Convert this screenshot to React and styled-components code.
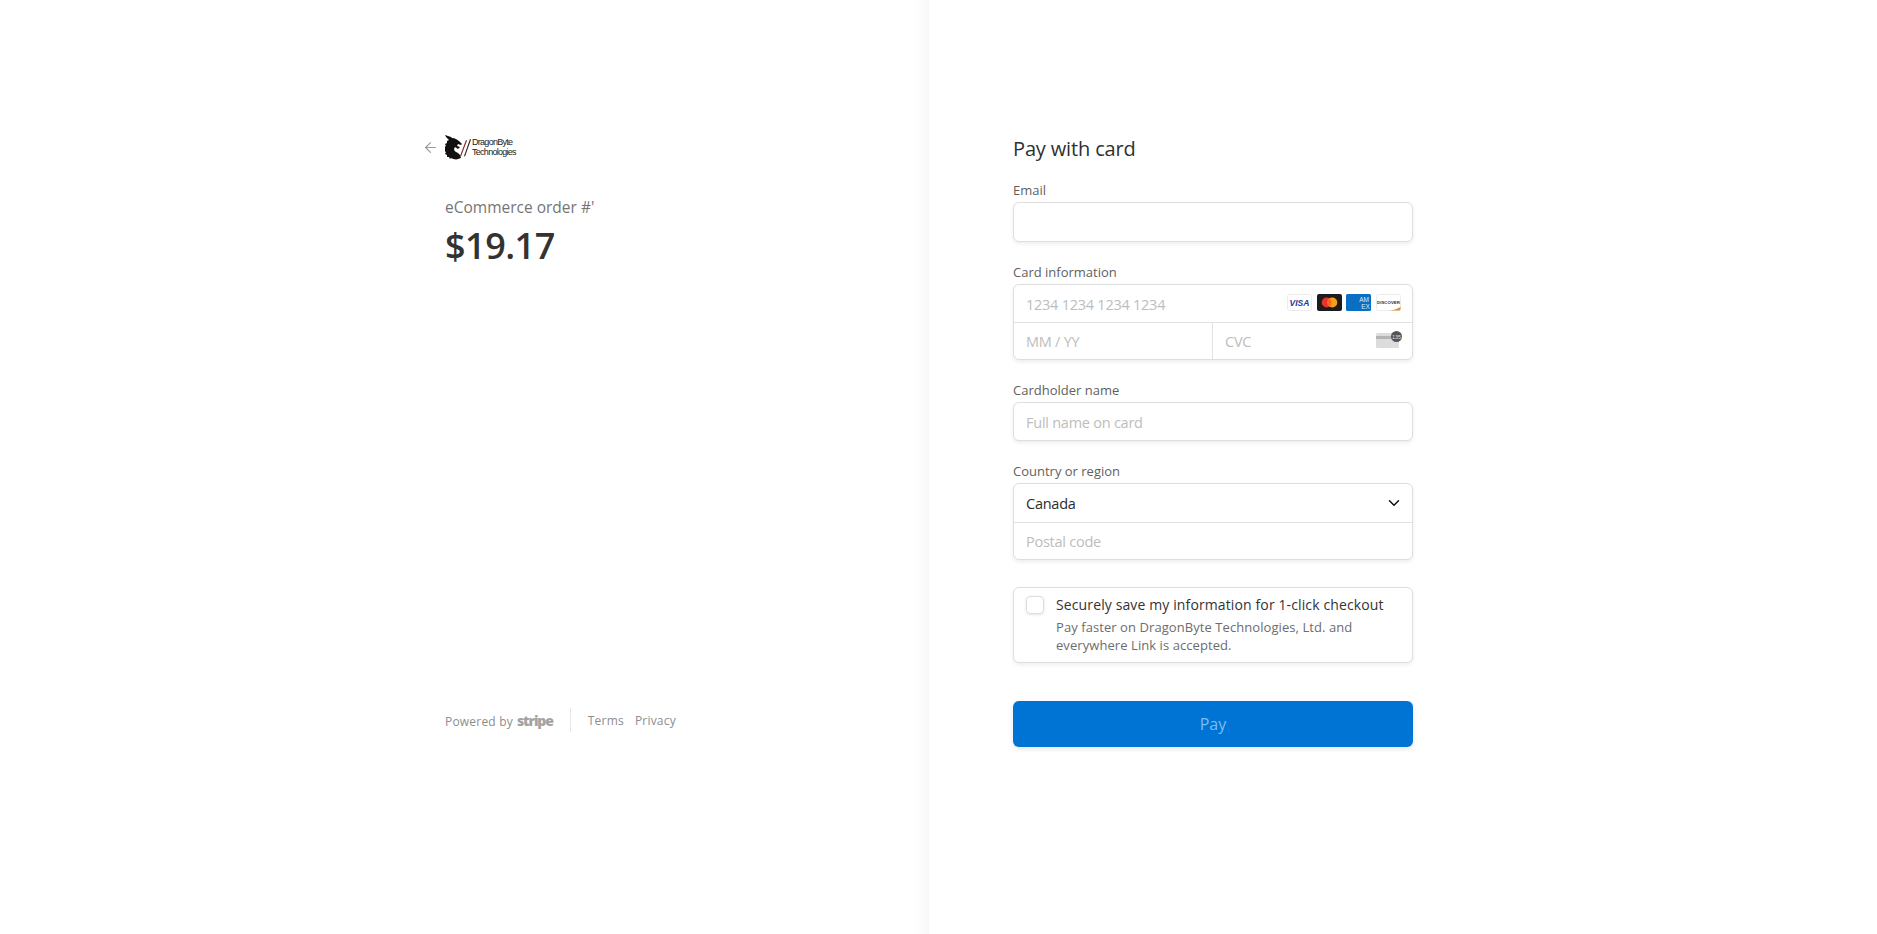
import styled, { createGlobalStyle } from "styled-components";
import { ArrowLeft, ChevronDown } from "lucide-react";

const Global = createGlobalStyle`
  html, body { margin: 0; padding: 0; background: #fff; }
  body { font-family: "Open Sans", "Noto Sans", sans-serif; color: #1a1a1a; }
  * { box-sizing: border-box; }
`;

const Page = styled.div`
  display: flex;
  height: 934px;
  overflow: hidden;
`;

const Overview = styled.section`
  width: 929px;
  flex: none;
  height: 100%;
  padding: 134px 0 0 422px;
  display: flex;
  flex-direction: column;
  background: linear-gradient(to right, #fff, #f8f8f8) right top / 14px 100% no-repeat;
`;

const Header = styled.div`
  display: flex;
  align-items: center;
  height: 26px;
  color: #9a9a9a;
`;

const Back = styled.span`
  display: flex;
  width: 23px;
  flex: none;
`;

const Brand = styled.div`
  display: flex;
  align-items: center;
  height: 26px;
`;

const BrandName = styled.div`
  font-family: "Liberation Sans", sans-serif;
  font-size: 9px;
  line-height: 10px;
  letter-spacing: -0.72px;
  color: #222;
  white-space: pre;
`;

const Summary = styled.div`
  padding: 37px 0 0 23px;
`;

const OrderName = styled.div`
  font-size: 15.5px;
  line-height: 20px;
  color: #757575;
`;

const Amount = styled.div`
  font-size: 36px;
  line-height: 44px;
  margin-top: 7px;
  font-weight: 600;
  letter-spacing: -0.5px;
  color: #333;
`;

const Footer = styled.footer`
  display: flex;
  align-items: center;
  margin: 440px 0 0 23px;
  height: 24px;
  font-size: 12px;
  letter-spacing: 0.2px;
  color: #8d8d8d;
`;

const Powered = styled.div`
  display: flex;
  align-items: baseline;
  gap: 4px;
  padding-right: 17px;
`;

const StripeWord = styled.span`
  font-size: 14px;
  font-weight: 800;
  letter-spacing: -1.1px;
  color: #a3a3a3;
`;

const FooterLinks = styled.div`
  display: flex;
  gap: 11px;
  height: 24px;
  align-items: center;
  padding-left: 17px;
  border-left: 1px solid #e6e6e6;
`;

const Checkout = styled.main`
  flex: 1;
  padding: 134px 0 0 84px;
`;

const Form = styled.form`
  width: 400px;
  display: flex;
  flex-direction: column;
`;

const Title = styled.h1`
  margin: 0 0 18px 0;
  font-size: 20px;
  line-height: 30px;
  font-weight: 400;
  letter-spacing: -0.15px;
  color: #303030;
`;

const Field = styled.div`
  margin-bottom: 22px;
`;

const Label = styled.div`
  font-size: 13px;
  line-height: 16px;
  height: 20px;
  color: #5f5f5f;
`;

const Group = styled.div`
  border: 1px solid #dedede;
  border-radius: 6px;
  background: #fff;
  box-shadow: 0 2px 4px rgba(0, 0, 0, 0.07);
`;

const Row = styled.div`
  display: flex;
  height: ${(p) => p.$height ?? 37.5}px;
  & + & {
    border-top: 1px solid #e2e2e2;
  }
`;

const Cell = styled.div`
  flex: none;
  width: ${(p) => p.$width ?? "100%"};
  display: flex;
  align-items: center;
  justify-content: space-between;
  padding: 0 ${(p) => p.$right ?? 11}px 0 12px;
  & + & {
    border-left: 1px solid #e2e2e2;
  }
`;

const Placeholder = styled.span`
  margin-top: 2px;
  font-size: 14.5px;
  letter-spacing: -0.25px;
  color: #bdbdbd;
`;

const Value = styled.span`
  margin-top: 1px;
  font-size: 14.5px;
  letter-spacing: -0.25px;
  color: #2b2b2b;
`;

const Brands = styled.div`
  display: flex;
  gap: 4.6px;
  margin-top: -2px;
`;

const Chevron = styled(ChevronDown)`
  margin-right: -2px;
`;

const Cvc = styled.svg`
  margin-top: -2px;
`;

const SaveBox = styled(Group)`
  display: flex;
  gap: 10px;
  height: 76px;
  padding: 7px 12px;
  margin-top: 5px;
  margin-bottom: 38px;
`;

const Check = styled.span`
  flex: none;
  width: 18px;
  height: 18px;
  margin-top: 1px;
  border: 1px solid #dcdcdc;
  border-radius: 4px;
  box-shadow: 0 1px 3px rgba(0, 0, 0, 0.1);
`;

const SaveText = styled.div`
  min-width: 0;
  flex: 1;
  padding-left: 2px;
`;

const SaveTitle = styled.div`
  font-size: 14px;
  line-height: 19px;
  letter-spacing: 0.12px;
  color: #333;
  white-space: nowrap;
`;

const SaveNote = styled.div`
  margin-top: 4px;
  font-size: 13px;
  line-height: 18px;
  letter-spacing: 0.07px;
  color: #6d6d6d;
`;

const PayButton = styled.button`
  height: 46px;
  border: 0;
  border-radius: 6px;
  background: #0074d4;
  color: #7cbdf0;
  font-family: inherit;
  font-size: 16px;
  box-shadow: 0 2px 5px rgba(0, 0, 0, 0.1);
`;

function Logo() {
  return (
    <svg width="27" height="26" viewBox="0 0 27 26" aria-hidden="true">
      <path
        d="M0 1l6 2 1 1c3 0 6 2 8 4l2 2-1 1-3-1-1 2 3 1-2 2-3-2-1 2c0 2 2 3 4 4l2 2 1 3-3 1c-2 1-5 0-7-1l-1 1-1-2-2 0 0-2-2-1 1-2-2-1 1-2-1-2 2-1-1-2 2-1 0-2 2-1-3-3z"
        fill="#111"
      />
      <path d="M21 6l1 .5-6 16-1-.5z" fill="#7a2222" />
      <path d="M25 5l1 .5-6 17-1-.5z" fill="#3a1a1a" />
    </svg>
  );
}

function Visa() {
  return (
    <svg width="25" height="17" viewBox="0 0 25 17" aria-hidden="true">
      <rect x="0.5" y="0.5" width="24" height="16" rx="2" fill="#fff" stroke="#ececec" />
      <text x="12.5" y="11.5" textAnchor="middle" fontFamily="Liberation Sans" fontSize="8.5" fontWeight="700" fontStyle="italic" fill="#1f3a93">VISA</text>
    </svg>
  );
}

function Mastercard() {
  return (
    <svg width="25" height="17" viewBox="0 0 25 17" aria-hidden="true">
      <rect width="25" height="17" rx="2" fill="#1c1c1c" />
      <circle cx="9.7" cy="8.5" r="5" fill="#e5352b" />
      <circle cx="15.3" cy="8.5" r="5" fill="#f79e1b" />
      <path d="M12.5 4.4a5 5 0 0 1 0 8.2 5 5 0 0 1 0-8.2z" fill="#f26a1f" />
    </svg>
  );
}

function Amex() {
  return (
    <svg width="25" height="17" viewBox="0 0 25 17" aria-hidden="true">
      <rect width="25" height="17" rx="1.5" fill="#0a6fc2" />
      <text x="18" y="8" textAnchor="middle" fontFamily="Liberation Sans" fontSize="6.5" fill="#dcecf8">AM</text>
      <text x="19.5" y="14.5" textAnchor="middle" fontFamily="Liberation Sans" fontSize="6.5" fill="#dcecf8">EX</text>
    </svg>
  );
}

function Discover() {
  return (
    <svg width="25" height="17" viewBox="0 0 25 17" aria-hidden="true">
      <rect x="0.5" y="0.5" width="24" height="16" rx="2" fill="#fff" stroke="#ececec" />
      <text x="12.5" y="9.5" textAnchor="middle" fontFamily="Liberation Sans" fontSize="4.4" fontWeight="700" fill="#333">DISCOVER</text>
      <path d="M11 16.5c6 0 11-1.5 13.5-4v2.5a1.5 1.5 0 0 1-1.5 1.5z" fill="#e98a2b" />
    </svg>
  );
}

function CvcIcon() {
  return (
    <Cvc width="26" height="17" viewBox="0 0 26 17" aria-hidden="true">
      <rect x="0" y="2" width="23" height="15" rx="1.5" fill="#dcdcdc" />
      <rect x="0" y="5" width="23" height="3" fill="#b5b5b5" />
      <circle cx="20.5" cy="5.5" r="5.5" fill="#555" />
      <text x="20.5" y="7.5" textAnchor="middle" fontFamily="Liberation Sans" fontSize="5.5" fill="#ddd">135</text>
    </Cvc>
  );
}

export default function App() {
  return (
    <Page>
      <Global />
      <Overview>
        <Header>
          <Back>
            <ArrowLeft size={17} strokeWidth={1.6} />
          </Back>
          <Brand>
            <Logo />
            <BrandName>{"DragonByte\nTechnologies"}</BrandName>
          </Brand>
        </Header>
        <Summary>
          <OrderName>eCommerce order #'</OrderName>
          <Amount>$19.17</Amount>
        </Summary>
        <Footer>
          <Powered>
            Powered by <StripeWord>stripe</StripeWord>
          </Powered>
          <FooterLinks>
            <span>Terms</span>
            <span>Privacy</span>
          </FooterLinks>
        </Footer>
      </Overview>
      <Checkout>
        <Form>
          <Title>Pay with card</Title>
          <Field>
            <Label>Email</Label>
            <Group>
              <Row />
            </Group>
          </Field>
          <Field>
            <Label>Card information</Label>
            <Group>
              <Row $height={37}>
                <Cell>
                  <Placeholder>1234 1234 1234 1234</Placeholder>
                  <Brands>
                    <Visa />
                    <Mastercard />
                    <Amex />
                    <Discover />
                  </Brands>
                </Cell>
              </Row>
              <Row $height={37}>
                <Cell $width="198px">
                  <Placeholder>MM / YY</Placeholder>
                </Cell>
                <Cell $width="200px" $right={10}>
                  <Placeholder>CVC</Placeholder>
                  <CvcIcon />
                </Cell>
              </Row>
            </Group>
          </Field>
          <Field>
            <Label>Cardholder name</Label>
            <Group>
              <Row>
                <Cell>
                  <Placeholder>Full name on card</Placeholder>
                </Cell>
              </Row>
            </Group>
          </Field>
          <Field>
            <Label>Country or region</Label>
            <Group>
              <Row>
                <Cell>
                  <Value>Canada</Value>
                  <Chevron size={18} strokeWidth={2} color="#111" />
                </Cell>
              </Row>
              <Row>
                <Cell>
                  <Placeholder>Postal code</Placeholder>
                </Cell>
              </Row>
            </Group>
          </Field>
          <SaveBox>
            <Check />
            <SaveText>
              <SaveTitle>Securely save my information for 1-click checkout</SaveTitle>
              <SaveNote>
                Pay faster on DragonByte Technologies, Ltd. and
                <br />
                everywhere Link is accepted.
              </SaveNote>
            </SaveText>
          </SaveBox>
          <PayButton type="button">Pay</PayButton>
        </Form>
      </Checkout>
    </Page>
  );
}
